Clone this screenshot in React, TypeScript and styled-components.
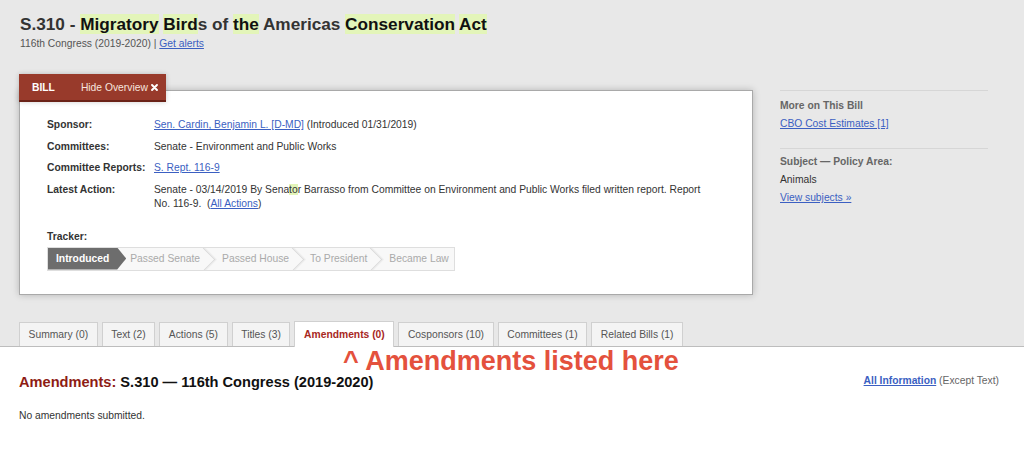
import React from 'react';
import styled, { createGlobalStyle } from 'styled-components';

const GlobalStyle = createGlobalStyle`
    html, body {
        margin: 0;
        padding: 0;
        background: #ffffff;
    }
    body {
        font-family: "Liberation Sans", Arial, Helvetica, sans-serif;
        font-size: 10.3px;
        color: #333333;
    }
`;

const COLORS = {
    link: '#3b5fc2',
    bg: '#e8e8e8',
    hl: '#e3f5b9',
    brick: '#983a2b',
    red: '#a8281e',
};

const TopArea = styled.div`
    background: ${COLORS.bg};
    padding-top: 14px;
`;

const Header = styled.div`
    padding-left: 20px;
`;

const Title = styled.h1`
    margin: 0;
    font-size: 17.2px;
    line-height: 20px;
    font-weight: bold;
    color: #333333;
    mark {
        background: ${COLORS.hl};
        color: #111111;
    }
`;

const SubTitle = styled.div`
    margin-top: 3px;
    line-height: 14px;
    color: #555555;
`;

const Link = styled.a<{ $bold?: boolean }>`
    color: ${COLORS.link};
    text-decoration: underline;
    font-weight: ${(p) => (p.$bold ? 'bold' : 'normal')};
    cursor: pointer;
`;

const Overview = styled.div`
    display: flex;
    align-items: flex-start;
    gap: 27px;
    margin-top: 39px;
    padding-left: 19px;
`;

const BillCard = styled.div`
    position: relative;
    width: 734px;
    height: 205px;
    box-sizing: border-box;
    background: #ffffff;
    border: 1px solid #a9a9a9;
    box-shadow: 0 0 7px rgba(0, 0, 0, 0.22);
    padding: 27px 27px 0 27px;
`;

const CardTab = styled.div`
    position: absolute;
    top: -17px;
    left: -1px;
    width: 147px;
    height: 28px;
    box-sizing: border-box;
    display: flex;
    align-items: center;
    padding: 0 0 0 13px;
    background: ${COLORS.brick};
    border-bottom: 2px solid #6a2217;
    color: #ffffff;
    white-space: nowrap;
    box-shadow: 0 0 5px rgba(0, 0, 0, 0.2);
`;

const TabTitle = styled.span`
    font-weight: bold;
    flex-shrink: 0;
    margin-right: 26px;
`;

const HideLink = styled.span`
    display: flex;
    align-items: center;
    gap: 3px;
    flex-shrink: 0;
    color: #f6e4df;
`;

const InfoRow = styled.div`
    display: flex;
    line-height: 14px;
    margin-bottom: 7.5px;
`;

const InfoLabel = styled.div`
    width: 107px;
    flex-shrink: 0;
    font-weight: bold;
`;

const InfoValue = styled.div`
    width: 562px;
    mark {
        background: ${COLORS.hl};
        color: inherit;
    }
`;

const TrackerLabel = styled.div`
    margin-top: 19px;
    font-weight: bold;
    line-height: 14px;
`;

const TrackerBar = styled.div`
    margin-top: 3px;
    display: inline-flex;
    height: 24px;
    box-sizing: border-box;
    border: 1px solid #dedede;
    background: #f8f8f8;
    overflow: hidden;
`;

const Step = styled.div<{ $active?: boolean; $pl: number; $pr: number; $chevron?: boolean }>`
    position: relative;
    display: flex;
    align-items: center;
    padding: 0 ${(p) => p.$pr}px 0 ${(p) => p.$pl}px;
    background: ${(p) => (p.$active ? '#6d6d6d' : 'transparent')};
    clip-path: ${(p) =>
        p.$active ? 'polygon(0 0, calc(100% - 9px) 0, 100% 50%, calc(100% - 9px) 100%, 0 100%)' : 'none'};
    color: ${(p) => (p.$active ? '#ffffff' : '#aaaaaa')};
    font-weight: ${(p) => (p.$active ? 'bold' : 'normal')};
    white-space: nowrap;
    &::after {
        content: '';
        display: ${(p) => (p.$chevron ? 'block' : 'none')};
        position: absolute;
        top: 3px;
        right: -6px;
        width: 16px;
        height: 16px;
        transform: rotate(45deg);
        border-top: 1px solid #d9d9d9;
        border-right: 1px solid #d9d9d9;
        box-shadow: 1px -1px 1px rgba(0, 0, 0, 0.05);
    }
`;

const Sidebar = styled.div`
    width: 208px;
    border-top: 1px solid #d6d6d6;
`;

const SideSection = styled.div<{ $divided?: boolean }>`
    padding: ${(p) => (p.$divided ? '6px 0 0' : '8px 0 17px')};
    border-bottom: ${(p) => (p.$divided ? 'none' : '1px solid #d6d6d6')};
`;

const SideLine = styled.div<{ $head?: boolean }>`
    line-height: 14px;
    color: ${(p) => (p.$head ? '#666666' : '#333333')};
    font-weight: ${(p) => (p.$head ? 'bold' : 'normal')};
    & + & {
        margin-top: 4px;
    }
`;

const TabBar = styled.div`
    display: flex;
    align-items: flex-end;
    gap: 4px;
    margin-top: 26px;
    padding-left: 19px;
    border-bottom: 1px solid #bdbdbd;
`;

const Tab = styled.div<{ $active?: boolean }>`
    height: ${(p) => (p.$active ? 26 : 24)}px;
    line-height: ${(p) => (p.$active ? 26 : 24)}px;
    margin-bottom: ${(p) => (p.$active ? -1 : 0)}px;
    box-sizing: border-box;
    padding: 0 8.6px;
    background: ${(p) => (p.$active ? '#ffffff' : '#f4f4f4')};
    border: 1px solid #d0d0d0;
    border-bottom: none;
    color: ${(p) => (p.$active ? COLORS.red : '#555555')};
    font-weight: ${(p) => (p.$active ? 'bold' : 'normal')};
    white-space: nowrap;
`;

const Content = styled.div`
    position: relative;
    background: #ffffff;
    padding: 26px 25px 40px 19px;
`;

const Annotation = styled.div`
    position: absolute;
    left: 343px;
    top: -1px;
    font-size: 27px;
    line-height: 30px;
    font-weight: bold;
    color: #e4513d;
    white-space: nowrap;
`;

const HeadingRow = styled.div`
    display: flex;
    justify-content: space-between;
    align-items: baseline;
`;

const Heading = styled.h2`
    margin: 0;
    font-size: 14.6px;
    line-height: 18px;
    font-weight: bold;
    color: #111111;
    span {
        color: #8e1c14;
    }
`;

const AllInfo = styled.div`
    color: #666666;
    line-height: 14px;
    position: relative;
    top: -3px;
`;

const Empty = styled.p`
    margin: 18px 0 0;
    line-height: 14px;
`;

const CloseIcon = () => (
    <svg width="7" height="7" viewBox="0 0 10 10">
        <path d="M1.5 1.5 L8.5 8.5 M8.5 1.5 L1.5 8.5" stroke="#ffffff" strokeWidth="2.8" strokeLinecap="round" />
    </svg>
);

// label, padding-left, padding-right
const TRACKER: [string, number, number][] = [
    ['Introduced', 8, 17],
    ['Passed Senate', 4, 6],
    ['Passed House', 16, 6],
    ['To President', 15, 6],
    ['Became Law', 16, 5],
];

const TABS = [
    'Summary (0)',
    'Text (2)',
    'Actions (5)',
    'Titles (3)',
    'Amendments (0)',
    'Cosponsors (10)',
    'Committees (1)',
    'Related Bills (1)',
];

const App = () => {
    return (
        <>
            <GlobalStyle />
            <TopArea>
                <Header>
                    <Title>
                        S.310 - <mark>Migratory</mark> <mark>Bird</mark>s of <mark>the</mark> Americas{' '}
                        <mark>Conservation</mark> <mark>Act</mark>
                    </Title>
                    <SubTitle>
                        116th Congress (2019-2020) | <Link>Get alerts</Link>
                    </SubTitle>
                </Header>
                <Overview>
                    <BillCard>
                        <CardTab>
                            <TabTitle>BILL</TabTitle>
                            <HideLink>
                                Hide Overview <CloseIcon />
                            </HideLink>
                        </CardTab>
                        <InfoRow>
                            <InfoLabel>Sponsor:</InfoLabel>
                            <InfoValue>
                                <Link>Sen. Cardin, Benjamin L. [D-MD]</Link> (Introduced 01/31/2019)
                            </InfoValue>
                        </InfoRow>
                        <InfoRow>
                            <InfoLabel>Committees:</InfoLabel>
                            <InfoValue>Senate - Environment and Public Works</InfoValue>
                        </InfoRow>
                        <InfoRow>
                            <InfoLabel>Committee Reports:</InfoLabel>
                            <InfoValue>
                                <Link>S. Rept. 116-9</Link>
                            </InfoValue>
                        </InfoRow>
                        <InfoRow>
                            <InfoLabel>Latest Action:</InfoLabel>
                            <InfoValue>
                                Senate - 03/14/2019 By Sena<mark>to</mark>r Barrasso from Committee on Environment and
                                Public Works filed written report. Report No. 116-9.&nbsp; (<Link>All Actions</Link>)
                            </InfoValue>
                        </InfoRow>
                        <TrackerLabel>Tracker:</TrackerLabel>
                        <TrackerBar>
                            {TRACKER.map(([step, pl, pr], i) => (
                                <Step
                                    key={step}
                                    $active={i === 0}
                                    $pl={pl}
                                    $pr={pr}
                                    $chevron={i > 0 && i < TRACKER.length - 1}
                                >
                                    {step}
                                </Step>
                            ))}
                        </TrackerBar>
                    </BillCard>
                    <Sidebar>
                        <SideSection>
                            <SideLine $head>More on This Bill</SideLine>
                            <SideLine>
                                <Link>CBO Cost Estimates [1]</Link>
                            </SideLine>
                        </SideSection>
                        <SideSection $divided>
                            <SideLine $head>Subject — Policy Area:</SideLine>
                            <SideLine>Animals</SideLine>
                            <SideLine>
                                <Link>View subjects »</Link>
                            </SideLine>
                        </SideSection>
                    </Sidebar>
                </Overview>
                <TabBar>
                    {TABS.map((t) => (
                        <Tab key={t} $active={t.startsWith('Amendments')}>
                            {t}
                        </Tab>
                    ))}
                </TabBar>
            </TopArea>
            <Content>
                <Annotation>^ Amendments listed here</Annotation>
                <HeadingRow>
                    <Heading>
                        <span>Amendments:</span> S.310 — 116th Congress (2019-2020)
                    </Heading>
                    <AllInfo>
                        <Link $bold>All Information</Link> (Except Text)
                    </AllInfo>
                </HeadingRow>
                <Empty>No amendments submitted.</Empty>
            </Content>
        </>
    );
};

export default App;
